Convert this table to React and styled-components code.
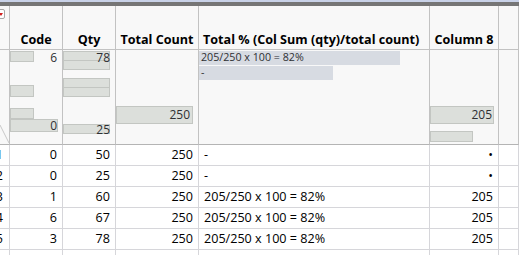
import React from 'react';
import styled, { createGlobalStyle } from 'styled-components';

const GlobalStyle = createGlobalStyle`
  html, body {
    margin: 0;
    background: #ffffff;
  }
  body {
    font-family: "Open Sans", "Noto Sans", sans-serif;
    color: #000;
  }
`;

const columns = [
  { key: 'code', title: 'Code', align: 'right' },
  { key: 'qty', title: 'Qty', align: 'right' },
  { key: 'total', title: 'Total Count', align: 'right' },
  { key: 'pct', title: 'Total % (Col Sum (qty)/total count)', align: 'left' },
  { key: 'col8', title: 'Column 8', align: 'right' },
];

const rows = [
  { code: 0, qty: 50, total: 250, pct: '-', col8: '•' },
  { code: 0, qty: 25, total: 250, pct: '-', col8: '•' },
  { code: 1, qty: 60, total: 250, pct: '205/250 x 100 = 82%', col8: 205 },
  { code: 6, qty: 67, total: 250, pct: '205/250 x 100 = 82%', col8: 205 },
  { code: 3, qty: 78, total: 250, pct: '205/250 x 100 = 82%', col8: 205 },
  { code: '', qty: '', total: '', pct: '', col8: '' },
];

// mini distribution bars for each column's summary cell (top/height/width in px)
const summaries = {
  code: {
    bars: [
      { top: 1, height: 11, width: 24 },
      { top: 35, height: 12, width: 24 },
      { top: 58, height: 11, width: 24 },
      { top: 69, height: 13, width: 48 },
    ],
    labels: [
      { top: 1, text: '6', right: 5 },
      { top: 69, text: '0', right: 5 },
    ],
  },
  qty: {
    bars: [
      { top: 1, height: 10, width: 47 },
      { top: 10, height: 10, width: 47 },
      { top: 28, height: 10, width: 47 },
      { top: 37, height: 10, width: 47 },
      { top: 74, height: 10, width: 47 },
    ],
    labels: [
      { top: 1, text: '78', right: 5 },
      { top: 73, text: '25', right: 5 },
    ],
  },
  total: {
    bars: [{ top: 56, height: 18, width: 77 }],
    labels: [{ top: 58, text: '250', right: 8 }],
  },
  pct: {
    flat: true,
    bars: [
      { top: 1, height: 14, width: 201 },
      { top: 16, height: 14, width: 134 },
    ],
    labels: [
      { top: 1, text: '205/250 x 100 = 82%', left: 2 },
      { top: 16, text: '-', left: 2 },
    ],
  },
  col8: {
    bars: [
      { top: 56, height: 18, width: 64 },
      { top: 81, height: 11, width: 43 },
    ],
    labels: [{ top: 58, text: '205', right: 6 }],
  },
};

const Window = styled.div`
  width: 519px;
  height: 255px;
  overflow: hidden;
  background: #ffffff;
`;

const TitleStrip = styled.div`
  height: 4px;
  border-top: 2px solid #c9d2e8;
  background: #767676;
`;

const Grid = styled.div`
  display: grid;
  grid-template-columns: 10px 53px 53px 83px 231px 69px 1fr;
  grid-template-rows: 44px 95px repeat(6, 21px);
`;

const HeaderCell = styled.div`
  box-sizing: border-box;
  background: #f8f8f8;
  border-right: 1px solid #c2c2c2;
  border-bottom: 1px solid #c2c2c2;
  display: flex;
  align-items: flex-end;
  justify-content: ${({ $align }) => ($align === 'left' ? 'flex-start' : 'center')};
  padding: 0 4px 1px;
  font-size: 12.6px;
  line-height: 17px;
  font-weight: 700;
  white-space: nowrap;
  overflow: hidden;
  position: relative;
`;

const CornerCell = styled(HeaderCell)`
  padding: 0;
`;

const RedMark = styled.div`
  position: absolute;
  left: -6px;
  top: 3px;
  width: 9px;
  height: 8px;
  border: 1px solid #a8a8a8;
  border-radius: 2px;
  background: #fff;
  &::after {
    content: '';
    position: absolute;
    right: 1px;
    top: 3px;
    border-left: 2px solid transparent;
    border-right: 2px solid transparent;
    border-top: 3px solid #d02020;
  }
`;

const SummaryCell = styled.div`
  box-sizing: border-box;
  background: #f8f8f8;
  border-right: 1px solid #c2c2c2;
  border-bottom: 1px solid #b4b4b4;
  position: relative;
  overflow: hidden;
`;

const CornerLine = styled.svg`
  position: absolute;
  left: 0;
  bottom: 0;
`;

const Bar = styled.div`
  position: absolute;
  left: 0;
  box-sizing: border-box;
  background: ${({ $flat }) => ($flat ? '#d7dbe2' : '#dcdfdb')};
  border: ${({ $flat }) => ($flat ? 'none' : '1px solid #c3c6c2')};
`;

const BarLabel = styled.span`
  position: absolute;
  font-size: ${({ $small }) => ($small ? '10.7px' : '12px')};
  line-height: 13px;
  color: #2e3033;
  white-space: nowrap;
`;

const Cell = styled.div`
  box-sizing: border-box;
  background: #ffffff;
  border-right: 1px solid #d6d6da;
  border-bottom: 1px solid #d6d6da;
  font-size: 12.6px;
  line-height: 20px;
  padding: 0 5px;
  text-align: ${({ $align }) => $align};
  white-space: nowrap;
  overflow: hidden;
`;

const RowNumber = styled(Cell)`
  padding: 0 6px 0 0;
  text-align: right;
  direction: rtl;
`;

const Summary = ({ data }) => (
  <SummaryCell>
    {data.bars.map((b, i) => (
      <Bar key={i} $flat={data.flat} style={{ top: b.top, height: b.height, width: b.width }} />
    ))}
    {data.labels.map((l, i) => (
      <BarLabel
        key={i}
        $small={data.flat}
        style={l.left !== undefined ? { top: l.top, left: l.left } : { top: l.top, right: l.right }}
      >
        {l.text}
      </BarLabel>
    ))}
  </SummaryCell>
);

const App = () => (
  <Window>
    <GlobalStyle />
    <TitleStrip />
    <Grid>
      <CornerCell>
        <RedMark />
      </CornerCell>
      {columns.map(c => (
        <HeaderCell key={c.key} $align={c.align}>{c.title}</HeaderCell>
      ))}
      <HeaderCell />

      <SummaryCell>
        <CornerLine width="10" height="20" viewBox="0 0 10 20">
          <line x1="0" y1="1" x2="9" y2="19" stroke="#c8c8c8" strokeWidth="1" />
        </CornerLine>
      </SummaryCell>
      {columns.map(c => (
        <Summary key={c.key} data={summaries[c.key]} />
      ))}
      <SummaryCell />

      {rows.map((r, i) => (
        <React.Fragment key={i}>
          <RowNumber>{i + 1}</RowNumber>
          {columns.map(c => (
            <Cell key={c.key} $align={c.align}>{r[c.key]}</Cell>
          ))}
          <Cell />
        </React.Fragment>
      ))}
    </Grid>
  </Window>
);

export default App;
